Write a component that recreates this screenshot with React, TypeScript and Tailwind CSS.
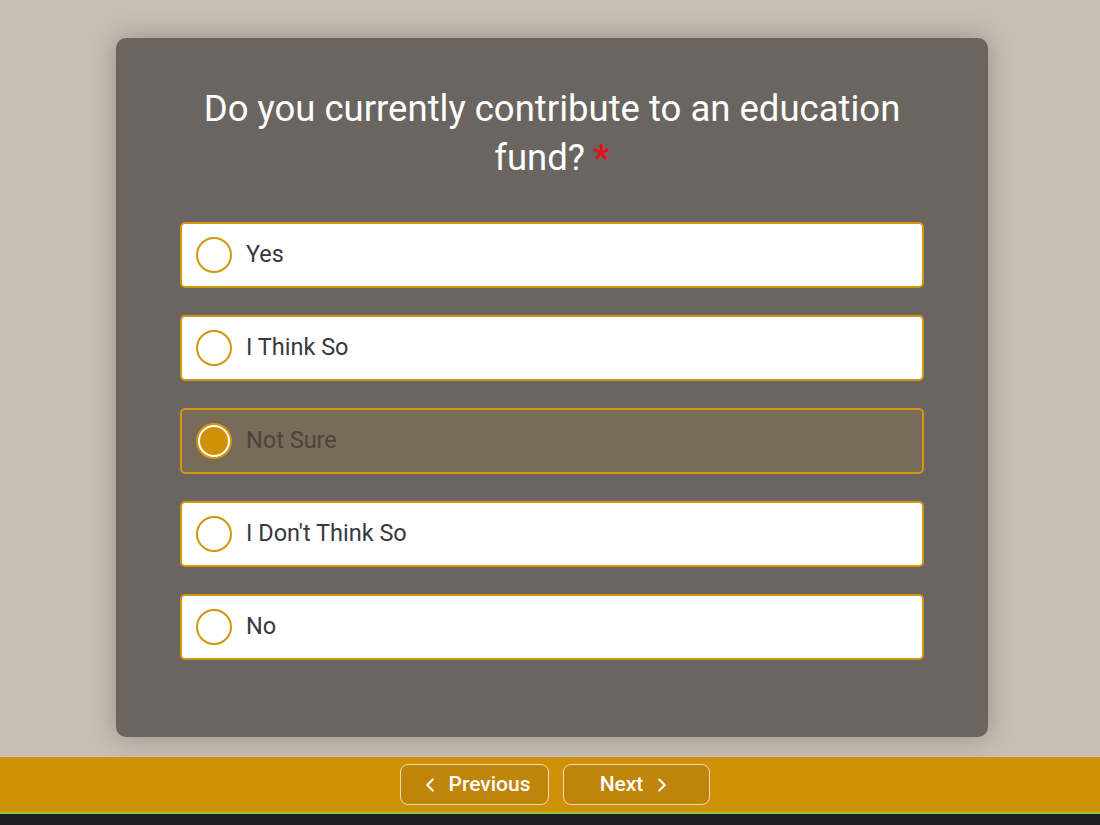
import React, { useState } from "react";
import { ChevronLeft, ChevronRight } from "lucide-react";

const options = ["Yes", "I Think So", "Not Sure", "I Don't Think So", "No"];

const App: React.FC = () => {
  const [selected, setSelected] = useState("Not Sure");

  return (
    <div className="h-[825px] flex flex-col bg-[#c7beb5] font-['Roboto',sans-serif] overflow-hidden">
      {/* Question card */}
      <div className="pt-[38px] pb-[20px] pl-[4px] flex justify-center">
        <div className="w-[872px] h-[699px] bg-[#6a6561] rounded-[10px] shadow-[0_0_24px_rgba(60,50,40,0.35)] px-[64px] pt-[46px]">
          <h1 className="text-center text-white text-[36.5px] leading-[49px] mb-[40px]">
            Do you currently contribute to an education fund?
            <span className="text-[#e0141e] font-bold ml-[8px]">*</span>
          </h1>

          <div className="flex flex-col gap-[27px]">
            {options.map((opt) => {
              const active = opt === selected;
              return (
                <button
                  key={opt}
                  onClick={() => setSelected(opt)}
                  className={
                    active
                      ? "h-[66px] w-full flex items-center gap-[14px] px-[14px] rounded-[5px] border-2 border-[#d4950f] bg-[#786b58] text-left"
                      : "h-[66px] w-full flex items-center gap-[14px] px-[14px] rounded-[5px] border-2 border-[#d4950f] bg-white text-left"
                  }
                >
                  {active ? (
                    <span className="w-[36px] h-[36px] rounded-full border-2 border-[#d4950f] bg-white flex items-center justify-center">
                      <span className="w-[28px] h-[28px] rounded-full bg-[#d09008]" />
                    </span>
                  ) : (
                    <span className="w-[36px] h-[36px] rounded-full border-2 border-[#d4950f] bg-white" />
                  )}
                  <span
                    className={
                      active
                        ? "text-[23.5px] text-[#4a443e]"
                        : "text-[23.5px] text-[#38383e]"
                    }
                  >
                    {opt}
                  </span>
                </button>
              );
            })}
          </div>
        </div>
      </div>

      {/* Navigation bar */}
      <div className="h-[55px] bg-[#d09008] pl-[10px] flex items-center justify-center gap-[14px]">
        <button className="w-[149px] h-[41px] rounded-[8px] border border-[#f3ddb0] bg-[#bf840a] text-white text-[21px] font-medium flex items-center justify-center gap-[8px]">
          <ChevronLeft className="w-[22px] h-[22px]" strokeWidth={2.25} />
          Previous
        </button>
        <button className="w-[147px] h-[41px] rounded-[8px] border border-[#f3ddb0] bg-[#bf840a] text-white text-[21px] font-medium flex items-center justify-center gap-[8px]">
          Next
          <ChevronRight className="w-[22px] h-[22px]" strokeWidth={2.25} />
        </button>
      </div>
      <div className="h-[2px] bg-[#8dc63f]" />
      <div className="flex-1 bg-[#1f1e22]" />
    </div>
  );
};

export default App;
